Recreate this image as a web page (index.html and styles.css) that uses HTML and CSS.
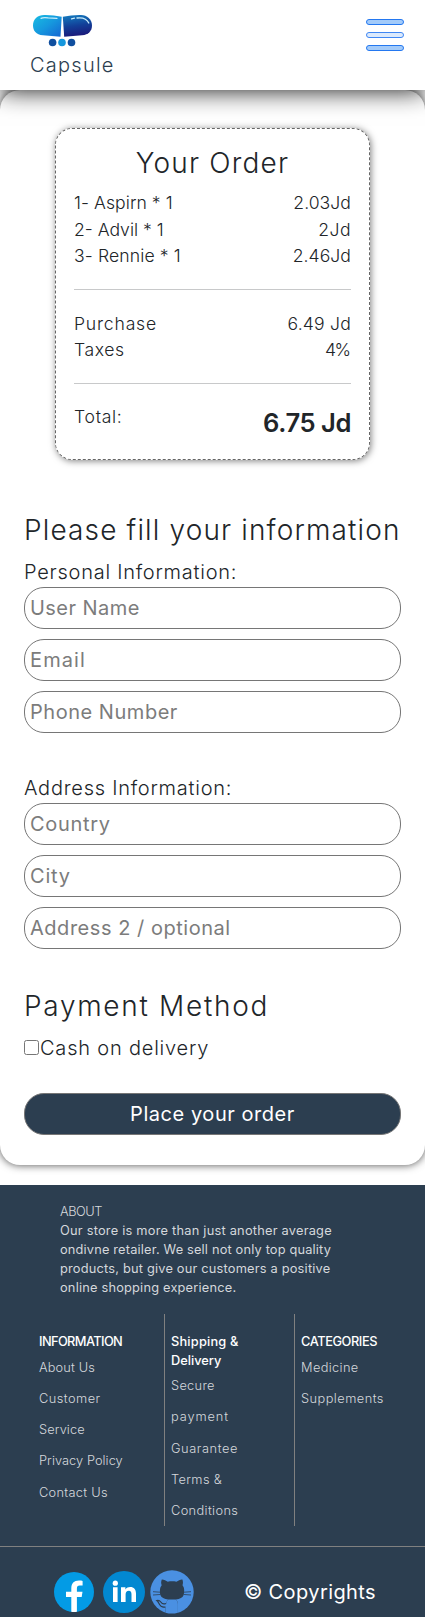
FILE: index.html
```
<!DOCTYPE html>
<html lang="en">
<head>
<meta charset="utf-8">
<meta name="viewport" content="width=device-width, initial-scale=1">
<title>Capsule</title>
<link rel="stylesheet" href="styles.css">
</head>
<body>
<header class="topbar">
  <a class="brand">
    <svg class="brand-mark" width="64" height="36" viewBox="0 0 64 36">
      <defs>
        <linearGradient id="pillLeft" x1="0" y1="0" x2="1" y2="1"><stop offset="0" stop-color="#18bde2"/><stop offset=".5" stop-color="#1698de"/><stop offset="1" stop-color="#1565d2"/></linearGradient>
        <linearGradient id="pillRight" x1=".3" y1="0" x2=".5" y2="1"><stop offset="0" stop-color="#1478bd"/><stop offset=".5" stop-color="#123f98"/><stop offset="1" stop-color="#1c1778"/></linearGradient>
      </defs>
      <path d="M14 3Q23 2.800 31.700 4.800L30.500 24.700L13 23.300C6 22.700 3 18.500 3 13.500C3 7 8 3 14 3Z" fill="url(#pillLeft)"/>
      <path d="M32.800 4.800Q42 2.800 51 3C57 3.300 62 7 62 13.500C62 19 58.500 22.700 52 23.300L34.200 24.700Z" fill="url(#pillRight)"/>
      <path d="M11 6.300Q13 5.300 18 5.800M18 5.800L27 6.300M41.500 6.800L44.500 6.200M47 6Q56 4.800 58.800 11" fill="none" stroke="#c8ecfa" stroke-width="1.300" stroke-linecap="round"/>
      <circle cx="22.600" cy="30.500" r="3.800" fill="#104f9f"/>
      <circle cx="32" cy="30.500" r="3.800" fill="#1697dd"/>
      <circle cx="41.500" cy="30.500" r="3.800" fill="#104f9f"/>
    </svg>
    <span class="brand-name">Capsule</span>
  </a>
  <div class="burger"><i></i><i class="pale"></i><i></i></div>
</header>
<main class="checkout">
  <section class="order">
    <h1 class="order-title">Your Order</h1>
    <div class="rows">
      <div class="row"><span class="t-06">1- Aspirn * 1</span><span class="t-10">2.03Jd</span></div>
      <div class="row"><span class="t-00">2- Advil * 1</span><span class="t-46">2Jd</span></div>
      <div class="row"><span class="t-11">3- Rennie * 1</span><span class="t-10">2.46Jd</span></div>
    </div>
    <div class="rows ruled">
      <div class="row"><span class="t-80">Purchase</span><span class="t-20">6.49 Jd</span></div>
      <div class="row"><span class="t-57">Taxes</span><span class="t-pct">4%</span></div>
    </div>
    <div class="rows ruled last">
      <div class="row"><span class="t-70">Total:</span><strong class="total">6.75 Jd</strong></div>
    </div>
  </section>
  <form class="info">
    <h2 class="heading">Please fill your information</h2>
    <label class="label">Personal Information:</label>
    <div class="fields">
      <input class="field t-46" placeholder="User Name">
      <input class="field t-110" placeholder="Email">
      <input class="field t-53" placeholder="Phone Number">
    </div>
    <label class="label later">Address Information:</label>
    <div class="fields">
      <input class="field t-70" placeholder="Country">
      <input class="field t-80" placeholder="City">
      <input class="field t-53" placeholder="Address 2 / optional">
    </div>
    <h2 class="heading payment">Payment Method</h2>
    <label class="cash"><input class="check" type="checkbox"><span class="t-80">Cash on delivery</span></label>
    <button class="submit" type="button">Place your order</button>
  </form>
</main>
<footer class="footer">
  <div class="about">
    <h3 class="about-title">ABOUT</h3>
    <p class="about-text"><span class="t-23">Our store is more than just another average</span><br><span class="t-17">ondivne retailer. We sell not only top quality</span><br><span class="t-20">products, but give our customers a positive</span><br><span class="t-20">online shopping experience.</span></p>
  </div>
  <div class="columns">
    <div class="col first">
      <h4 class="col-title t-caps">INFORMATION</h4>
      <ul class="links"><li class="t-13">About Us</li><li><span class="t-46">Customer</span><br><span class="t-11">Service</span></li><li class="t-06">Privacy Policy</li><li class="t-30">Contact Us</li></ul>
    </div>
    <div class="col">
      <h4 class="col-title"><span class="t-20">Shipping &amp;</span><br>Delivery</h4>
      <ul class="links"><li><span class="t-30">Secure</span><br><span class="t-90">payment</span></li><li class="t-57">Guarantee</li><li class="t-36">Terms &amp;<br>Conditions</li></ul>
    </div>
    <div class="col">
      <h4 class="col-title t-cats">CATEGORIES</h4>
      <ul class="links"><li class="t-36">Medicine</li><li class="t-46">Supplements</li></ul>
    </div>
  </div>
  <div class="bottom">
    <div class="social">
      <svg width="40" height="40" viewBox="0 0 40 40"><circle cx="20" cy="20" r="20" fill="#039be5"/><path d="M17.300 39.800V25H12V19.700H17.300V16.500C17.300 11.200 19.900 8.500 25 8.500C26.700 8.500 27.700 8.700 28.600 8.900V13.500H25.700C23.600 13.500 22.900 14.600 22.900 16.700V19.700H28.500L27.700 25H22.900V39.700Q20 40.200 17.300 39.800Z" fill="#fff"/></svg>
      <svg width="42" height="42" viewBox="0 0 42 42"><circle cx="21" cy="21" r="21" fill="#0288d1"/><path d="M10 16.300H14.600V31H10ZM18 16.300H22.400V18.400C23.600 16.600 25.300 15.900 27.200 15.900C31 15.900 33 18.300 33 22.600V31H28.500V23.500C28.500 21 27.700 19.800 25.900 19.800C23.700 19.800 22.600 21.200 22.600 23.700V31H18Z" fill="#fff"/><circle cx="12.300" cy="12.200" r="2.600" fill="#fff"/></svg>
      <svg width="44" height="44" viewBox="0 0 44 44"><circle cx="22" cy="22" r="21.700" fill="#4a90e2"/><path d="M15.500 44V37.500C10.500 38.200 10.200 34.500 8.300 32.700C7.300 31.700 6.800 31.500 6.800 30.700C9.800 29.300 11.500 33.500 13.500 34C14.800 34.300 15.700 33.900 16.300 33.500C16.500 31.500 17.500 30.300 18.300 29.600C14.300 29.100 11.300 27.600 10.200 24.700C9.500 19 10.300 16.900 11.700 15.200C10.900 13 11 11.300 11.800 9.400C13.900 9.300 16 10.500 17.800 11.800C20.600 11.200 23.600 11.200 26.400 11.800C28.500 10.300 30.500 9.300 32.400 9.500C33.100 11.600 33.200 13.200 32.500 15.200C33.900 17 34.800 19 33.800 24.700C32.700 27.500 30 29.100 25.800 29.600C27.300 30.800 27.900 32.300 27.900 34.300V44Z" fill="#2c3e50"/><path d="M15.500 44V37.500C10.500 38.200 10.200 34.500 8.300 32.700C7.300 31.700 6.800 31.500 6.800 30.700C9.800 29.300 11.500 33.500 13.500 34C14.800 34.300 15.700 33.900 16.300 33.500C16.500 31.500 17.500 30.300 18.300 29.600H25.800C27.300 30.800 27.900 32.300 27.900 34.300V42.700A21.700 21.700 0 0 1 15.500 42.700Z" fill="#4a90e2"/><path d="M15.900 33.500C13 34.800 11.800 33.500 10.800 32C9.800 30.600 8.500 30 6.800 30.500C8.300 31.500 8.700 33 9.700 34.800C10.800 36.900 13 37.400 15.500 37" fill="none" stroke="#2c3e50" stroke-width="1.200"/><path d="M3 21.700L10 22.200M3 25L10.200 24.500M34 22.200L41 21.700M34 24.500L41 25" stroke="#2c3e50" stroke-width=".8"/></svg>
    </div>
    <span class="copyright">© Copyrights</span>
  </div>
</footer>
</body>
</html>
```
FILE: styles.css
```
* { box-sizing: border-box; }
body { margin: 0; background: #fff; color: #212529; font-family: Inter, sans-serif; font-weight: 300; overflow-x: hidden; }
h1, h2, h3, h4, p, ul { margin: 0; padding: 0; font-weight: 300; }
li { list-style: none; }

.topbar { position: relative; z-index: 2; height: 90px; padding: 12px 21px 0 30px; display: flex; justify-content: space-between; align-items: flex-start; background: #fff; box-shadow: 0 0 24px rgba(0,0,0,.95); }
.brand { display: flex; flex-direction: column; gap: 2px; color: #2c3e50; }
.brand-mark { display: block; }
.brand-name { font-size: 20px; line-height: 30px; letter-spacing: 1.25px; }
.burger { display: flex; flex-direction: column; gap: 7px; padding-top: 7px; }
.burger i { width: 38px; height: 6px; border: 1.500px solid #2478f0; border-radius: 3px; background: #a3cbfa; }
.burger .pale { border-color: #4087f3; background: #dceafc; }

.checkout { padding: 38px 24px 30px; border-radius: 20px; background: #fff; box-shadow: 0 0 8px rgba(0,0,0,.7); }
.order { width: 315px; height: 332px; margin: 0 auto; padding: 17px 18px 0; border: 1px dashed #666; border-radius: 17px; box-shadow: 1px 1px 7px rgba(0,0,0,.5); }
.order-title { font-size: 28px; line-height: 34px; letter-spacing: 1.2px; text-align: center; margin-bottom: 10px; }
.row { display: flex; justify-content: space-between; align-items: flex-start; font-size: 17.600px; line-height: 26.500px; }
.ruled { margin-top: 19px; padding-top: 21px; border-top: 1px solid #c8c9ca; }
.last { padding-top: 20px; }
.total { font-size: 25.600px; line-height: 37px; font-weight: 600; letter-spacing: -.450px; }

.info { display: flex; flex-direction: column; margin-top: 53px; }
.heading { font-size: 28px; line-height: 34px; letter-spacing: 1.150px; white-space: nowrap; }
.label { margin-top: 10px; padding-left: 0; font-size: 20px; line-height: 30px; letter-spacing: .750px; }
.label.later { margin-top: 40px; }
.fields { display: flex; flex-direction: column; gap: 10px; }
.field { width: 377px; height: 42px; padding: 1px 5px; border: 1px solid #767676; border-radius: 20px; background: #fff; font-family: inherit; font-weight: 400; font-size: 20px; outline: none; }
.field::placeholder { color: #7c7c7c; opacity: 1; }
.payment { margin-top: 40px; letter-spacing: 1.700px; }
.cash { display: flex; align-items: center; margin-top: 10px; font-size: 20px; line-height: 30px; }
.check { width: 15px; height: 15px; margin: 0 1px 2px 0; }
.submit { width: 377px; height: 42px; margin-top: 30px; padding: 0; border: 1px solid #767676; border-radius: 20px; background: #2c3e50; color: #fff; font-family: inherit; font-weight: 400; font-size: 20px; letter-spacing: .550px; }

.footer { height: 432px; margin-top: 20px; padding-top: 17px; background: #2c3e50; color: #d5d8dc; font-size: 12.800px; font-weight: 400; overflow: hidden; }
.about { padding-left: 60px; height: 112px; }
.about-title { font-size: 12.800px; line-height: 19px; letter-spacing: -.450px; }
.about-text { font-weight: 400; line-height: 19px; white-space: nowrap; }
.columns { display: grid; grid-template-columns: 130px 130px 1fr; height: 212px; padding-left: 34px; }
.col { padding: 19px 0 0 6px; border-left: 1px solid #808080; white-space: nowrap; }
.col.first { padding-left: 5px; border-left: 0; }
.col-title { color: #fff; font-size: 12.800px; font-weight: 500; line-height: 18.500px; }
.links { line-height: 31.250px; }
.bottom { display: flex; justify-content: space-between; align-items: flex-start; margin-top: 20px; padding: 23px 49px 0 54px; border-top: 1px solid #808080; }
.social { display: flex; align-items: center; gap: 5px; }
.social svg:nth-child(1) { margin-right: 4px; }
.copyright { padding-top: 7px; color: #fff; font-size: 20px; line-height: 30px; letter-spacing: .400px; }

/* tracking steps */
.t-00 { letter-spacing: 0; }
.t-06 { letter-spacing: .060px; }
.t-10 { letter-spacing: .050px; }
.t-11 { letter-spacing: .110px; }
.t-13 { letter-spacing: .130px; }
.t-17 { letter-spacing: .170px; }
.t-20 { letter-spacing: .200px; }
.t-23 { letter-spacing: .230px; }
.t-30 { letter-spacing: .300px; }
.t-36 { letter-spacing: .360px; }
.t-46 { letter-spacing: .460px; }
.t-53 { letter-spacing: .530px; }
.t-57 { letter-spacing: .570px; }
.t-70 { letter-spacing: .700px; }
.t-80 { letter-spacing: .800px; }
.t-90 { letter-spacing: .900px; }
.t-110 { letter-spacing: 1.110px; }
.t-pct { letter-spacing: -1.600px; margin-right: 1.600px; }
.t-caps { letter-spacing: -.600px; }
.t-cats { letter-spacing: -.420px; }
```
